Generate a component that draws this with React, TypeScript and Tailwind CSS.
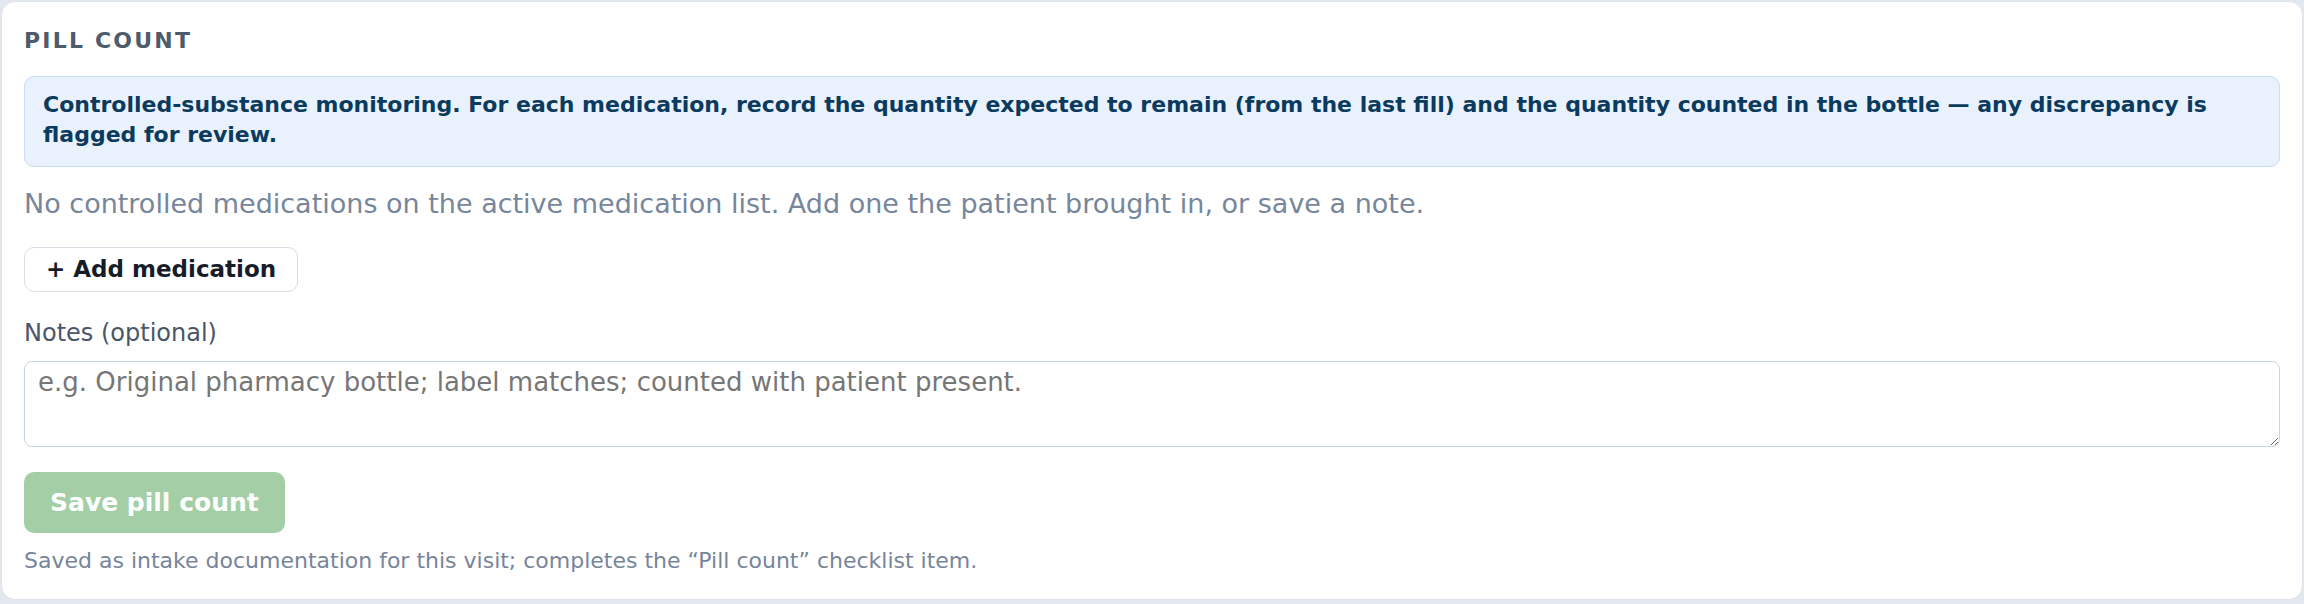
export default function App() {
  return (
    <div className="min-h-screen bg-[#e3e8ef] p-px" style={{ fontFamily: '"DejaVu Sans", "Noto Sans", sans-serif' }}>
      <section className="rounded-[14px] border border-[#dde3ea] bg-white px-[22px] pt-[22px] pb-[22px]">
        <h2 className="mb-[19px] text-[22px] leading-[33px] font-bold tracking-[0.1em] text-[#4d5b6c]">PILL COUNT</h2>

        <div className="rounded-[10px] border border-[#c7dcf4] bg-[#e9f1fc] px-[18px] pt-[12.5px] pb-[15.5px] text-[22px] leading-[30.5px] font-bold text-[#0b3a5f]">
          Controlled-substance monitoring. For each medication, record the quantity expected to remain (from the last fill) and the quantity counted in the bottle — any discrepancy is flagged for review.
        </div>

        <p className="mt-[16.7px] text-[27px] leading-[40.5px] text-[#77869a]">
          No controlled medications on the active medication list. Add one the patient brought in, or save a note.
        </p>

        <div className="mt-[22.8px] flex">
          <button
            type="button"
            className="h-[45px] rounded-[10px] border-[1.5px] border-[#d8dee6] bg-white px-[21px] text-[23px] leading-[30px] font-bold text-[#161d29]"
          >
            + Add medication
          </button>
        </div>

        <label className="mt-[23.4px] block text-[24px] leading-[36px] text-[#4a5668]">Notes (optional)</label>
        <textarea
          className="mt-[9.6px] block h-[86px] w-full rounded-[8px] border-[1.5px] border-[#c9d4e2] px-[13px] pt-[3px] text-[26px] leading-[34px] text-[#1f2937] placeholder:text-[#767676]"
          placeholder="e.g. Original pharmacy bottle; label matches; counted with patient present."
        />

        <div className="mt-[25px] flex">
          <button
            type="button"
            disabled
            className="h-[61px] rounded-[10px] bg-[#a4cfa6] px-[26px] text-[25px] leading-[37.5px] font-bold text-white"
          >
            Save pill count
          </button>
        </div>

        <p className="mt-[10.6px] text-[22px] leading-[33px] text-[#778599]">
          Saved as intake documentation for this visit; completes the “Pill count” checklist item.
        </p>
      </section>
    </div>
  );
}
